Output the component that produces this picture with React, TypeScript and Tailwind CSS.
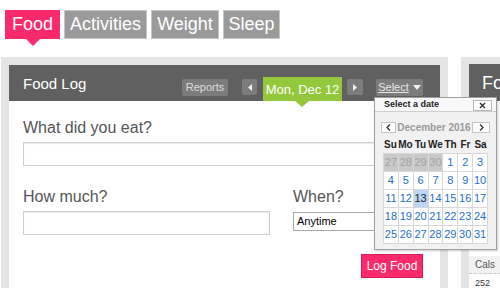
import React from "react";

const tabs = [
  { label: "Food", w: "w-[55px]", active: true },
  { label: "Activities", w: "w-[83px]", active: false },
  { label: "Weight", w: "w-[68px]", active: false },
  { label: "Sleep", w: "w-[57px]", active: false },
];

const days = ["Su", "Mo", "Tu", "We", "Th", "Fr", "Sa"];
const cells: { d: number; prev?: boolean; today?: boolean }[] = [
  { d: 27, prev: true },
  { d: 28, prev: true },
  { d: 29, prev: true },
  { d: 30, prev: true },
  ...Array.from({ length: 31 }, (_, i) => ({ d: i + 1, today: i + 1 === 13 })),
];

function Calendar() {
  return (
    <div className="absolute left-[374px] top-[97px] w-[123px] h-[153px] border border-[#a0a0a0] bg-[#f1f1f1] shadow-[1px_1px_2px_rgba(0,0,0,0.2)]">
      <div className="flex items-center h-[14px] bg-[#f8f8f8] border-b border-[#cfcfcf] pl-[9px] pr-[4px]">
        <span className="text-[9px] font-bold text-[#222] leading-none">Select a date</span>
        <div className="ml-auto mt-[2px] w-[19px] h-[11px] bg-white border border-[#b8b8b8] flex items-center justify-center">
          <svg width="7" height="7" viewBox="0 0 7 7">
            <path d="M1 1L6 6M6 1L1 6" stroke="#333" strokeWidth="1.4" />
          </svg>
        </div>
      </div>
      <div className="flex items-center mt-[10px] px-[6px] h-[11px]">
        <div className="w-[15px] h-[11px] bg-white border border-[#c4c4c4] flex items-center justify-center">
          <svg width="5" height="7" viewBox="0 0 5 7">
            <path d="M4 0.5L1 3.5L4 6.5" stroke="#333" strokeWidth="1.3" fill="none" />
          </svg>
        </div>
        <span className="flex-1 text-center text-[10px] font-bold text-[#9a9a9a] leading-none">December 2016</span>
        <div className="w-[18px] h-[11px] bg-white border border-[#c4c4c4] flex items-center justify-center">
          <svg width="5" height="7" viewBox="0 0 5 7">
            <path d="M1 0.5L4 3.5L1 6.5" stroke="#333" strokeWidth="1.3" fill="none" />
          </svg>
        </div>
      </div>
      <div className="ml-[8px] w-[105px] mt-[5px]">
        <div className="grid grid-cols-7 h-[14px] items-center">
          {days.map((d) => (
            <span key={d} className="text-center text-[10px] font-bold text-[#222] leading-none">
              {d}
            </span>
          ))}
        </div>
        <div className="grid grid-cols-7 border-l border-t border-[#d8d8d8] mt-[1px]">
          {cells.map((c, i) => (
            <div
              key={i}
              className={
                "h-[18px] flex items-center justify-center text-[11px] leading-none border-r border-b border-[#d8d8d8] " +
                (c.prev
                  ? "bg-[#c9c9c9] text-[#a3a3a3]"
                  : c.today
                  ? "bg-[#bcd6f6] text-[#222]"
                  : "bg-white text-[#1f6fc9]")
              }
            >
              {c.d}
            </div>
          ))}
        </div>
      </div>
    </div>
  );
}

export default function App() {
  return (
    <div className="relative w-[500px] h-[288px] overflow-hidden bg-white font-['Liberation_Sans',Arial,sans-serif]">
      {/* Tabs */}
      <div className="flex pt-[10px] pl-[5px] gap-[4px]">
        {tabs.map((t) => (
          <div
            key={t.label}
            className={
              "relative h-[29px] flex items-center justify-center text-[18px] text-white " +
              t.w +
              (t.active ? " bg-[#fb2b6b]" : " bg-[#9a9a9a] border border-[#c6c6c6]")
            }
          >
            {t.label}
            {t.active && (
              <div className="absolute left-[21px] top-[29px] w-0 h-0 border-l-[7px] border-r-[7px] border-t-[7px] border-l-transparent border-r-transparent border-t-[#fb2b6b]" />
            )}
          </div>
        ))}
      </div>

      {/* Panels */}
      <div className="flex mt-[18px] pl-[1px] gap-[13px]">
        {/* Main panel */}
        <div className="w-[447px] h-[300px] shrink-0 bg-[#e4e4e4] pt-[8px] px-[8px]">
          <div className="h-full bg-white flex flex-col">
            <div className="h-[36px] bg-[#606060] flex items-end pl-[14px]">
              <span className="self-center w-[159px] text-[15px] text-white leading-none">Food Log</span>
              <div className="mb-[5px] w-[46px] h-[17px] rounded-[2px] bg-[#7c7c7c] text-[11px] text-[#dcdcdc] flex items-center justify-center leading-none">
                Reports
              </div>
              <div className="mb-[6px] ml-[14px] w-[15px] h-[16px] rounded-[2px] bg-[#7c7c7c] flex items-center justify-center">
                <svg width="4" height="7" viewBox="0 0 4 7">
                  <path d="M4 0L0 3.5L4 7Z" fill="#f0f0f0" />
                </svg>
              </div>
              <div className="relative ml-[6px] w-[79px] h-[24px] bg-[#93c83c] flex items-center justify-center text-[13px] text-white leading-none">
                Mon, Dec 12
                <div className="absolute left-[32px] top-[24px] w-0 h-0 border-l-[7px] border-r-[7px] border-t-[6px] border-l-transparent border-r-transparent border-t-[#93c83c]" />
              </div>
              <div className="mb-[6px] ml-[5px] w-[16px] h-[16px] rounded-[2px] bg-[#7c7c7c] flex items-center justify-center">
                <svg width="4" height="7" viewBox="0 0 4 7">
                  <path d="M0 0L4 3.5L0 7Z" fill="#f0f0f0" />
                </svg>
              </div>
              <div className="mb-[5px] ml-[13px] w-[47px] h-[17px] rounded-[2px] bg-[#7c7c7c] flex items-center justify-center gap-[4px]">
                <span className="text-[11px] text-[#e8e8e8] underline leading-none">Select</span>
                <svg width="8" height="5" viewBox="0 0 8 5">
                  <path d="M0 0L8 0L4 5Z" fill="#f0f0f0" />
                </svg>
              </div>
            </div>

            <div className="flex flex-col pl-[14px] pr-[17px]">
              <span className="mt-[18px] text-[16px] text-[#555] leading-[18px]">What did you eat?</span>
              <div className="mt-[5px] w-[403px] h-[24px] border border-[#cfcfcf] shadow-[inset_0_1px_1px_rgba(0,0,0,0.08)]" />
              <div className="flex mt-[22px]">
                <div className="flex flex-col w-[273px]">
                  <span className="text-[16px] text-[#555] leading-[18px]">How much?</span>
                  <div className="mt-[5px] w-[247px] h-[24px] border border-[#cfcfcf] shadow-[inset_0_1px_1px_rgba(0,0,0,0.08)]" />
                </div>
                <div className="flex flex-col">
                  <span className="text-[16px] text-[#555] leading-[18px]">When?</span>
                  <div className="mt-[6px] w-[130px] h-[19px] border border-[#a8a8a8] flex items-center pl-[3px] text-[11px] text-black leading-none">
                    Anytime
                  </div>
                </div>
              </div>
              <div className="flex justify-end mt-[19px]">
                <div className="w-[62px] h-[24px] bg-[#fb2b6b] border border-[#d41d55] flex items-center justify-center text-[12px] text-white leading-none">
                  Log Food
                </div>
              </div>
            </div>
          </div>
        </div>

        {/* Second panel */}
        <div className="w-[60px] h-[300px] shrink-0 bg-[#e4e4e4] pt-[7px] pl-[8px]">
          <div className="h-full bg-white flex flex-col">
            <div className="h-[37px] bg-[#606060] flex items-center pl-[13px] text-[18px] text-white leading-none">
              Food
            </div>
            <div className="mt-[155px] h-[18px] bg-[#f2f2f2] border-b border-dashed border-[#c8c8c8] flex items-center pl-[6px] text-[10px] text-[#555] leading-none">
              Cals
            </div>
            <span className="mt-[5px] pl-[6px] text-[9px] text-[#333] leading-none">252</span>
          </div>
        </div>
      </div>

      <Calendar />
    </div>
  );
}
